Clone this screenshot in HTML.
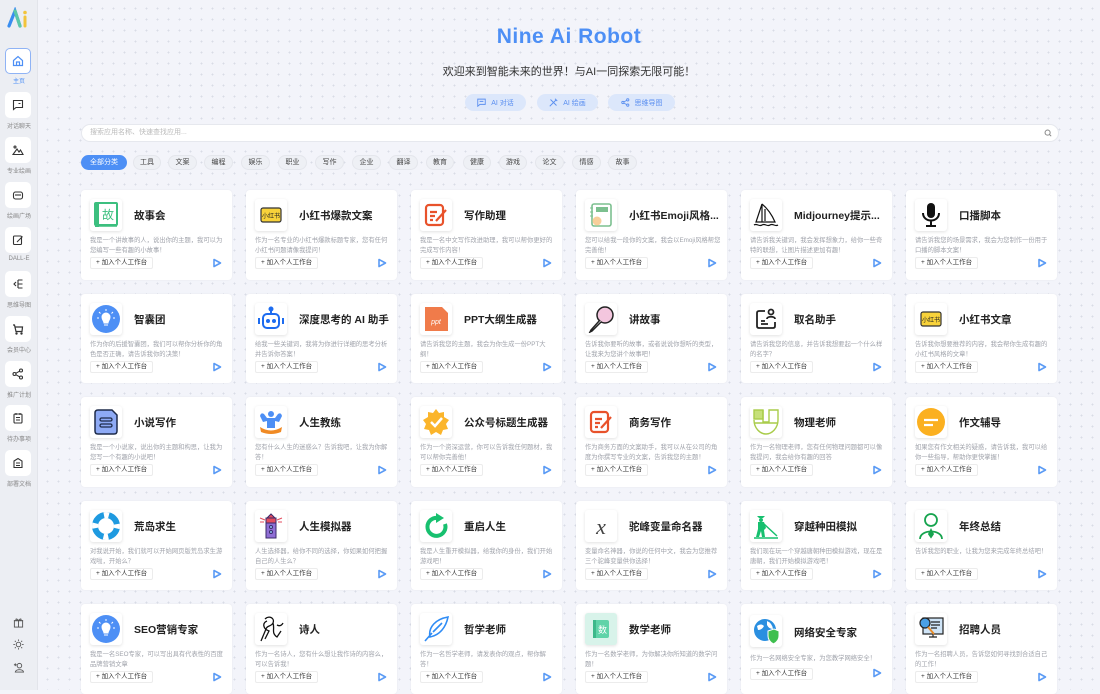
<!DOCTYPE html>
<html><head><meta charset="utf-8">
<style>
*{box-sizing:border-box;margin:0;padding:0}
body{width:1100px;height:690px;overflow:hidden;font-family:"Liberation Sans","Noto Sans CJK SC",sans-serif;background:#f3f4fa;position:relative}
.side{position:absolute;left:0;top:0;width:38px;height:690px;background:#eceef3;border-right:1px solid #e2e4ea}
.main{position:absolute;left:38px;top:0;right:0;height:690px;background-color:#f3f4fa;background-image:radial-gradient(#d9dce6 0.8px,transparent 1px);background-size:11px 11px;background-position:4px 3px}
.sb{position:absolute;left:5px;width:26px;height:26px;background:#fff;border-radius:5px;display:flex;align-items:center;justify-content:center}
.sl{position:absolute;left:0;width:38px;text-align:center;font-size:6px;color:#888}
.title{position:absolute;left:38px;right:0;top:25px;text-align:center;font-size:21px;font-weight:bold;color:#4d8ff5;letter-spacing:0.5px}
.sub{position:absolute;left:38px;right:0;top:63px;text-align:center;font-size:11px;color:#333}
.qb{position:absolute;top:94px;height:17px;border-radius:9px;background:#dce7fb;color:#5b8ff0;font-size:7px;display:flex;align-items:center;justify-content:center;gap:5px}
.search{position:absolute;left:81px;top:124px;width:978px;height:18px;background:#fff;border-radius:9px;border:1px solid #e6e8ee;font-size:7px;color:#bbb;padding-left:8px;line-height:16px}
.tag{position:absolute;top:155px;height:15px;border-radius:8px;background:#eef0f5;border:1px solid #e4e6ec;font-size:7px;color:#444;text-align:center;line-height:13px}
.grid{position:absolute;left:81px;top:190px;display:grid;grid-template-columns:repeat(6,151px);grid-auto-rows:89.5px;column-gap:14px;row-gap:14px}
.card{background:#fff;border-radius:4px;position:relative;box-shadow:0 0 2px rgba(0,0,0,0.05)}
.ic{position:absolute;left:9px;top:9px;width:32px;height:32px;border-radius:3px;background:#fff;box-shadow:0 1px 3px rgba(0,0,0,0.12);display:flex;align-items:center;justify-content:center;overflow:hidden}
.t{position:absolute;left:53px;top:18px;font-size:10.5px;font-weight:bold;color:#222;white-space:nowrap;max-width:92px;overflow:hidden;text-overflow:ellipsis}
.d{position:absolute;left:9px;top:46px;width:136px;font-size:6.3px;line-height:10px;color:#a0a3ab;height:20px;overflow:hidden}
.b{position:absolute;left:9px;top:67px;height:12px;border:1px solid #ececec;border-radius:2px;font-size:6.5px;color:#333;line-height:10px;padding:0 5px}
.p{position:absolute;right:10px;top:68px}
</style></head><body>
<div class="side">
<svg style="position:absolute;left:7px;top:7px" width="22" height="22" viewBox="0 0 22 22"><path d="M2 19 L8 4 L13 19" stroke="#3a8ef0" stroke-width="3.2" fill="none" stroke-linecap="round"/><path d="M8 4 L13 19" stroke="#5cc8a8" stroke-width="3.2" fill="none" stroke-linecap="round"/><path d="M18 10 V19" stroke="#f2c43b" stroke-width="3" stroke-linecap="round"/><circle cx="18" cy="5.5" r="1.8" fill="#f2c43b"/></svg>
<div class="sb" style="top:48px;border:1px solid #8fb3f5"><svg width="12" height="12" viewBox="0 0 12 12" fill="none" stroke="#4d8ff5" stroke-width="1.2"><path d="M1.5 5.5 L6 1.5 L10.5 5.5 V10.5 H1.5 Z M4.5 10.5 V7 H7.5 V10.5"/></svg></div><div class="sl" style="top:76px;color:#4d8ff5">主页</div>
<div class="sb" style="top:92px"><svg width="12" height="12" viewBox="0 0 12 12" fill="none" stroke="#333" stroke-width="1.1"><path d="M1.5 1.5 H10.5 V8.5 H4 L1.5 10.5 Z M6.5 4.5 H8.5"/></svg></div><div class="sl" style="top:121px">对话聊天</div>
<div class="sb" style="top:137px"><svg width="12" height="12" viewBox="0 0 12 12" fill="none" stroke="#333" stroke-width="1.1"><circle cx="3" cy="3" r="1"/><path d="M1 10.5 L5 5 L7 8 L8.5 6 L11 10.5 Z"/></svg></div><div class="sl" style="top:166px">专业绘画</div>
<div class="sb" style="top:182px"><svg width="12" height="12" viewBox="0 0 12 12" fill="none" stroke="#333" stroke-width="1.1"><rect x="1.5" y="3" width="9" height="7" rx="2"/><path d="M3 6 H9"/></svg></div><div class="sl" style="top:211px">绘画广场</div>
<div class="sb" style="top:227px"><svg width="12" height="12" viewBox="0 0 12 12" fill="none" stroke="#333" stroke-width="1.1"><rect x="1.5" y="2" width="8" height="8.5" rx="1"/><path d="M5 8 L10.5 2.5"/></svg></div><div class="sl" style="top:256px">DALL-E</div>
<div class="sb" style="top:271px"><svg width="12" height="12" viewBox="0 0 12 12" fill="none" stroke="#333" stroke-width="1.1"><path d="M6 2 H10.5 M6 6 H10.5 M6 10 H10.5 M6 2 V10 M4 4 L2 6 L4 8"/></svg></div><div class="sl" style="top:300px">思维导图</div>
<div class="sb" style="top:316px"><svg width="12" height="12" viewBox="0 0 12 12" fill="none" stroke="#333" stroke-width="1.2"><path d="M1 2 H2.5 L4 8.5 H10 L10.5 4 H3"/><circle cx="4.5" cy="10.5" r="0.6"/><circle cx="9.5" cy="10.5" r="0.6"/></svg></div><div class="sl" style="top:345px">会员中心</div>
<div class="sb" style="top:361px"><svg width="12" height="12" viewBox="0 0 12 12" fill="none" stroke="#333" stroke-width="1.1"><circle cx="9" cy="2.5" r="1.5"/><circle cx="2.5" cy="6" r="1.5"/><circle cx="9" cy="9.5" r="1.5"/><path d="M4 5.2 L7.6 3.2 M4 6.8 L7.6 8.8"/></svg></div><div class="sl" style="top:390px">推广计划</div>
<div class="sb" style="top:405px"><svg width="12" height="12" viewBox="0 0 12 12" fill="none" stroke="#333" stroke-width="1.1"><rect x="2" y="2" width="8" height="9" rx="1"/><path d="M4 1 V3 M8 1 V3 M4 5.5 H8 M4 8 H8"/></svg></div><div class="sl" style="top:434px">待办事项</div>
<div class="sb" style="top:450px"><svg width="12" height="12" viewBox="0 0 12 12" fill="none" stroke="#333" stroke-width="1.1"><path d="M2 4 L6 1.5 L10 4 V10.5 H2 Z M4 6 H8 M4 8.5 H8"/></svg></div><div class="sl" style="top:479px">部署文档</div>
<svg style="position:absolute;left:13px;top:617px" width="11" height="11" viewBox="0 0 12 12" fill="none" stroke="#555" stroke-width="1"><rect x="1.5" y="4" width="9" height="7"/><path d="M1 4 H11 M6 4 V11 M6 4 C4 1 2 2 4 4 M6 4 C8 1 10 2 8 4"/></svg>
<svg style="position:absolute;left:13px;top:639px" width="11" height="11" viewBox="0 0 12 12" fill="none" stroke="#555" stroke-width="1"><circle cx="6" cy="6" r="2.5"/><path d="M6 0.5 V2 M6 10 V11.5 M0.5 6 H2 M10 6 H11.5 M2 2 L3 3 M9 9 L10 10 M2 10 L3 9 M9 3 L10 2"/></svg>
<svg style="position:absolute;left:13px;top:662px" width="11" height="11" viewBox="0 0 12 12" fill="none" stroke="#555" stroke-width="1"><circle cx="7" cy="4" r="2.5"/><path d="M2.5 11 C3 7.5 11 7.5 11.5 11 Z M1 3 H4 M2.5 1.5 V4.5"/></svg>
</div>
<div class="main"></div>
<div class="title">Nine Ai Robot</div>
<div class="sub">欢迎来到智能未来的世界！与AI一同探索无限可能！</div>
<div class="qb" style="left:465px;width:61px"><svg width="9" height="9" viewBox="0 0 12 12" fill="none" stroke="#5b8ff0" stroke-width="1.2"><path d="M1 1.5 H11 V8.5 H4 L1 11 Z M3.5 4.5 H8.5"/></svg>AI 对话</div>
<div class="qb" style="left:537px;width:61px"><svg width="9" height="9" viewBox="0 0 12 12" fill="none" stroke="#5b8ff0" stroke-width="1.2"><path d="M1 11 L10 2 M2 2 L10 10 M8 1 L11 4"/></svg>AI 绘画</div>
<div class="qb" style="left:608px;width:67px"><svg width="9" height="9" viewBox="0 0 12 12" fill="none" stroke="#5b8ff0" stroke-width="1.2"><circle cx="9" cy="2.5" r="1.5"/><circle cx="2.5" cy="6" r="1.5"/><circle cx="9" cy="9.5" r="1.5"/><path d="M4 5.2 L7.6 3.2 M4 6.8 L7.6 8.8"/></svg>思维导图</div>
<div class="search">搜索应用名称、快速查找应用...<svg style="position:absolute;right:6px;top:4px" width="8" height="8" viewBox="0 0 10 10" fill="none" stroke="#888" stroke-width="1.2"><circle cx="4.5" cy="4.5" r="3.2"/><path d="M7 7 L9 9"/></svg></div>
<div class="tag" style="left:81px;width:46px;background:#4d8ff5;border-color:#4d8ff5;color:#fff">全部分类</div>
<div class="tag" style="left:133px;width:28px">工具</div>
<div class="tag" style="left:168px;width:29px">文案</div>
<div class="tag" style="left:204px;width:29px">编程</div>
<div class="tag" style="left:241px;width:29px">娱乐</div>
<div class="tag" style="left:278px;width:29px">职业</div>
<div class="tag" style="left:315px;width:29px">写作</div>
<div class="tag" style="left:352px;width:29px">企业</div>
<div class="tag" style="left:389px;width:29px">翻译</div>
<div class="tag" style="left:426px;width:28px">教育</div>
<div class="tag" style="left:463px;width:28px">健康</div>
<div class="tag" style="left:499px;width:28px">游戏</div>
<div class="tag" style="left:535px;width:29px">论文</div>
<div class="tag" style="left:572px;width:29px">情感</div>
<div class="tag" style="left:608px;width:29px">故事</div>

<div class="grid">
<!-- row 1 -->
<div class="card"><div class="ic"><svg width="28" height="28" viewBox="0 0 28 28"><rect x="3" y="2" width="22" height="22" rx="1" fill="#fff" stroke="#3cbf7f" stroke-width="2"/><rect x="3" y="2" width="4" height="24" fill="#3cbf7f"/><path d="M5 25 H25" stroke="#3cbf7f" stroke-width="1.5"/><text x="16" y="18" font-size="12" fill="#3cbf7f" text-anchor="middle" font-family="Noto Sans CJK SC">故</text></svg></div><div class="t">故事会</div><div class="d">我是一个讲故事的人，说出你的主题，我可以为您编写一些有趣的小故事！</div><div class="b">+ 加入个人工作台</div><svg class="p" width="10" height="10" viewBox="0 0 10 10"><path d="M2 1.5 L8.5 5 L2 8.5 Z" fill="none" stroke="#5b9bf5" stroke-width="1.6" stroke-linejoin="round"/></svg></div>
<div class="card"><div class="ic"><svg width="26" height="26" viewBox="0 0 26 26"><rect x="3" y="6" width="20" height="14" rx="2" fill="#f8d23a" stroke="#333" stroke-width="1.2"/><text x="13" y="16" font-size="6" text-anchor="middle" fill="#222" font-family="Noto Sans CJK SC">小红书</text></svg></div><div class="t">小红书爆款文案</div><div class="d">作为一名专业的小红书爆款标题专家，您有任何小红书问题请像我提问！</div><div class="b">+ 加入个人工作台</div><svg class="p" width="10" height="10" viewBox="0 0 10 10"><path d="M2 1.5 L8.5 5 L2 8.5 Z" fill="none" stroke="#5b9bf5" stroke-width="1.6" stroke-linejoin="round"/></svg></div>
<div class="card"><div class="ic"><svg width="26" height="26" viewBox="0 0 26 26" fill="none" stroke="#e8522b" stroke-width="2.2"><rect x="3" y="3" width="17" height="20" rx="3"/><path d="M7 10 H14 M7 14 H12 M7 18 H10 M13 19 L23 8"/></svg></div><div class="t">写作助理</div><div class="d">我是一名中文写作改进助理，我可以帮你更好的完成写作内容！</div><div class="b">+ 加入个人工作台</div><svg class="p" width="10" height="10" viewBox="0 0 10 10"><path d="M2 1.5 L8.5 5 L2 8.5 Z" fill="none" stroke="#5b9bf5" stroke-width="1.6" stroke-linejoin="round"/></svg></div>
<div class="card"><div class="ic"><svg width="26" height="26" viewBox="0 0 26 26"><rect x="4" y="2" width="19" height="22" rx="2" fill="#fff" stroke="#7cc08f" stroke-width="1.6"/><rect x="8" y="5" width="12" height="5" fill="#7cc08f"/><circle cx="9" cy="19" r="4.5" fill="#f7cf9b"/><path d="M2 6 H5 M2 10 H5 M2 14 H5" stroke="#7cc08f"/></svg></div><div class="t">小红书Emoji风格...</div><div class="d">您可以给我一段你的文案，我会以Emoji风格帮您完善他！</div><div class="b">+ 加入个人工作台</div><svg class="p" width="10" height="10" viewBox="0 0 10 10"><path d="M2 1.5 L8.5 5 L2 8.5 Z" fill="none" stroke="#5b9bf5" stroke-width="1.6" stroke-linejoin="round"/></svg></div>
<div class="card"><div class="ic"><svg width="28" height="28" viewBox="0 0 28 28" fill="none" stroke="#111" stroke-width="1.2"><path d="M10 3 L10 21 M10 3 C16 8 20 14 23 21 H4 C6 15 8 9 10 3 M13 8 L13 20 M2 24 C5 22 7 26 10 24 C13 22 15 26 18 24 C21 22 23 26 26 24"/></svg></div><div class="t">Midjourney提示...</div><div class="d">请告诉我关键词，我会发挥想象力，给你一些奇特的联想，让图片描述更加有趣！</div><div class="b">+ 加入个人工作台</div><svg class="p" width="10" height="10" viewBox="0 0 10 10"><path d="M2 1.5 L8.5 5 L2 8.5 Z" fill="none" stroke="#5b9bf5" stroke-width="1.6" stroke-linejoin="round"/></svg></div>
<div class="card"><div class="ic"><svg width="26" height="26" viewBox="0 0 26 26"><rect x="9" y="1" width="8" height="15" rx="4" fill="#111"/><path d="M5 11 C5 21 21 21 21 11 M13 19 V24 M8 24 H18" stroke="#111" stroke-width="2" fill="none"/></svg></div><div class="t">口播脚本</div><div class="d">请告诉我您的场景需求，我会为您制作一份用于口播的脚本文案！</div><div class="b">+ 加入个人工作台</div><svg class="p" width="10" height="10" viewBox="0 0 10 10"><path d="M2 1.5 L8.5 5 L2 8.5 Z" fill="none" stroke="#5b9bf5" stroke-width="1.6" stroke-linejoin="round"/></svg></div>
<!-- row 2 -->
<div class="card"><div class="ic"><svg width="30" height="30" viewBox="0 0 30 30"><circle cx="15" cy="15" r="14" fill="#4d8ff5"/><path d="M11 13 A4 4 0 1 1 19 13 C19 16 17 17 17 19 H13 C13 17 11 16 11 13 Z M13 21 H17" fill="#fff" stroke="#fff"/><path d="M15 5 V7 M8 8 L9.5 9.5 M22 8 L20.5 9.5 M6 14 H8 M22 14 H24" stroke="#fff"/></svg></div><div class="t">智囊团</div><div class="d">作为你的后援智囊团，我们可以帮你分析你的角色是否正确，请告诉我你的决策！</div><div class="b">+ 加入个人工作台</div><svg class="p" width="10" height="10" viewBox="0 0 10 10"><path d="M2 1.5 L8.5 5 L2 8.5 Z" fill="none" stroke="#5b9bf5" stroke-width="1.6" stroke-linejoin="round"/></svg></div>
<div class="card"><div class="ic"><svg width="28" height="28" viewBox="0 0 28 28" fill="none" stroke="#1d6cf0" stroke-width="2"><circle cx="14" cy="4" r="1.5" fill="#1d6cf0"/><path d="M14 5 V9"/><rect x="6" y="9" width="16" height="14" rx="4"/><path d="M2 13 V19 M26 13 V19"/><circle cx="11" cy="16" r="1" fill="#1d6cf0"/><circle cx="17" cy="16" r="1" fill="#1d6cf0"/></svg></div><div class="t">深度思考的 AI 助手</div><div class="d">给我一些关键词，我将为你进行详细的思考分析并告诉你答案！</div><div class="b">+ 加入个人工作台</div><svg class="p" width="10" height="10" viewBox="0 0 10 10"><path d="M2 1.5 L8.5 5 L2 8.5 Z" fill="none" stroke="#5b9bf5" stroke-width="1.6" stroke-linejoin="round"/></svg></div>
<div class="card"><div class="ic"><svg width="28" height="28" viewBox="0 0 28 28"><path d="M3 2 H20 L26 8 V26 H3 Z" fill="#f07b4a"/><text x="14" y="19" font-size="7" fill="#fff" font-style="italic" text-anchor="middle">ppt</text></svg></div><div class="t">PPT大纲生成器</div><div class="d">请告诉我您的主题，我会为你生成一份PPT大纲！</div><div class="b">+ 加入个人工作台</div><svg class="p" width="10" height="10" viewBox="0 0 10 10"><path d="M2 1.5 L8.5 5 L2 8.5 Z" fill="none" stroke="#5b9bf5" stroke-width="1.6" stroke-linejoin="round"/></svg></div>
<div class="card"><div class="ic"><svg width="28" height="28" viewBox="0 0 28 28" stroke="#222" stroke-width="1.5"><circle cx="18" cy="10" r="8" fill="#f3c6de"/><path d="M13 15 L4 25 L3 27 L5 26 L14 17" fill="#fff"/></svg></div><div class="t">讲故事</div><div class="d">告诉我你要听的故事，或者说说你想听的类型，让我来为您讲个故事吧！</div><div class="b">+ 加入个人工作台</div><svg class="p" width="10" height="10" viewBox="0 0 10 10"><path d="M2 1.5 L8.5 5 L2 8.5 Z" fill="none" stroke="#5b9bf5" stroke-width="1.6" stroke-linejoin="round"/></svg></div>
<div class="card"><div class="ic"><svg width="26" height="26" viewBox="0 0 26 26" fill="none" stroke="#222" stroke-width="1.8"><path d="M12 5 H6 Q4 5 4 7 V20 Q4 22 6 22 H20 Q22 22 22 20 V16"/><circle cx="18" cy="6" r="2.5"/><path d="M14 13 C14 10 22 10 22 13 M8 15 H12 M8 18 H15"/></svg></div><div class="t">取名助手</div><div class="d">请告诉我您的信息，并告诉我想要起一个什么样的名字？</div><div class="b">+ 加入个人工作台</div><svg class="p" width="10" height="10" viewBox="0 0 10 10"><path d="M2 1.5 L8.5 5 L2 8.5 Z" fill="none" stroke="#5b9bf5" stroke-width="1.6" stroke-linejoin="round"/></svg></div>
<div class="card"><div class="ic"><svg width="26" height="26" viewBox="0 0 26 26"><rect x="3" y="6" width="20" height="14" rx="2" fill="#f8d23a" stroke="#333" stroke-width="1.2"/><text x="13" y="16" font-size="6" text-anchor="middle" fill="#222" font-family="Noto Sans CJK SC">小红书</text></svg></div><div class="t">小红书文章</div><div class="d">告诉我你想要推荐的内容，我会帮你生成有趣的小红书风格的文章！</div><div class="b">+ 加入个人工作台</div><svg class="p" width="10" height="10" viewBox="0 0 10 10"><path d="M2 1.5 L8.5 5 L2 8.5 Z" fill="none" stroke="#5b9bf5" stroke-width="1.6" stroke-linejoin="round"/></svg></div>
<!-- row 3 -->
<div class="card"><div class="ic"><svg width="28" height="28" viewBox="0 0 28 28"><path d="M3 5 Q3 2 6 2 H20 L25 7 V23 Q25 26 22 26 H6 Q3 26 3 23 Z" fill="#8eaaf5" stroke="#1e2b4a" stroke-width="1.5"/><rect x="8" y="10" width="12" height="3" rx="1.5" fill="none" stroke="#1e2b4a" stroke-width="1.3"/><rect x="8" y="16" width="12" height="3" rx="1.5" fill="none" stroke="#1e2b4a" stroke-width="1.3"/></svg></div><div class="t">小说写作</div><div class="d">我是一个小说家，说出你的主题和构思，让我为您写一个有趣的小说吧！</div><div class="b">+ 加入个人工作台</div><svg class="p" width="10" height="10" viewBox="0 0 10 10"><path d="M2 1.5 L8.5 5 L2 8.5 Z" fill="none" stroke="#5b9bf5" stroke-width="1.6" stroke-linejoin="round"/></svg></div>
<div class="card"><div class="ic"><svg width="28" height="28" viewBox="0 0 28 28"><circle cx="14" cy="6" r="3" fill="#4d8ff5"/><path d="M3 8 Q4 4 7 6 L10 10 H18 L21 6 Q24 4 25 8 L22 14 L18 13 V20 H10 V13 L6 14 Z" fill="#4d8ff5"/><path d="M3 19 Q14 26 25 19 L24 24 Q14 28 4 24 Z" fill="#f08a24"/></svg></div><div class="t">人生教练</div><div class="d">您有什么人生的迷惑么？告诉我吧，让我为你解答！</div><div class="b">+ 加入个人工作台</div><svg class="p" width="10" height="10" viewBox="0 0 10 10"><path d="M2 1.5 L8.5 5 L2 8.5 Z" fill="none" stroke="#5b9bf5" stroke-width="1.6" stroke-linejoin="round"/></svg></div>
<div class="card"><div class="ic"><svg width="28" height="28" viewBox="0 0 28 28"><path d="M14 1 L17 5 L22 4 L22 9 L27 12 L24 16 L26 21 L21 22 L19 27 L14 24 L9 27 L7 22 L2 21 L4 16 L1 12 L6 9 L6 4 L11 5 Z" fill="#fbb52b"/><path d="M9 14 L13 18 L20 10" stroke="#fff" stroke-width="2.5" fill="none"/></svg></div><div class="t">公众号标题生成器</div><div class="d">作为一个资深运营，你可以告诉我任何题材，我可以帮你完善他！</div><div class="b">+ 加入个人工作台</div><svg class="p" width="10" height="10" viewBox="0 0 10 10"><path d="M2 1.5 L8.5 5 L2 8.5 Z" fill="none" stroke="#5b9bf5" stroke-width="1.6" stroke-linejoin="round"/></svg></div>
<div class="card"><div class="ic"><svg width="26" height="26" viewBox="0 0 26 26" fill="none" stroke="#e8522b" stroke-width="2.2"><rect x="3" y="3" width="17" height="20" rx="3"/><path d="M7 10 H14 M7 14 H12 M7 18 H10 M13 19 L23 8"/></svg></div><div class="t">商务写作</div><div class="d">作为商务方面的文案助手，我可以从在公司的角度为你撰写专业的文案，告诉我您的主题！</div><div class="b">+ 加入个人工作台</div><svg class="p" width="10" height="10" viewBox="0 0 10 10"><path d="M2 1.5 L8.5 5 L2 8.5 Z" fill="none" stroke="#5b9bf5" stroke-width="1.6" stroke-linejoin="round"/></svg></div>
<div class="card"><div class="ic"><svg width="28" height="28" viewBox="0 0 28 28" stroke="#a9cc4a" stroke-width="1.4"><rect x="2" y="2" width="9" height="9" fill="#c6e07a"/><path d="M11 2 V14 H17 V2 H26 V12 C26 20 20 26 14 26 C8 26 2 20 2 12 M2 15 H26" fill="none"/></svg></div><div class="t">物理老师</div><div class="d">作为一名物理老师，您有任何物理问题都可以像我提问，我会给你有趣的回答</div><div class="b">+ 加入个人工作台</div><svg class="p" width="10" height="10" viewBox="0 0 10 10"><path d="M2 1.5 L8.5 5 L2 8.5 Z" fill="none" stroke="#5b9bf5" stroke-width="1.6" stroke-linejoin="round"/></svg></div>
<div class="card"><div class="ic"><svg width="30" height="30" viewBox="0 0 30 30"><circle cx="15" cy="15" r="14" fill="#fbb020"/><path d="M8 13 H22 M8 18 H17" stroke="#fff" stroke-width="2.2"/></svg></div><div class="t">作文辅导</div><div class="d">如果您有作文相关的疑惑，请告诉我，我可以给你一些指导，帮助你更快掌握！</div><div class="b">+ 加入个人工作台</div><svg class="p" width="10" height="10" viewBox="0 0 10 10"><path d="M2 1.5 L8.5 5 L2 8.5 Z" fill="none" stroke="#5b9bf5" stroke-width="1.6" stroke-linejoin="round"/></svg></div>
<!-- row 4 -->
<div class="card"><div class="ic"><svg width="28" height="28" viewBox="0 0 28 28"><circle cx="14" cy="14" r="11" fill="none" stroke="#1f9ae0" stroke-width="6"/><circle cx="14" cy="14" r="11" fill="none" stroke="#fff" stroke-width="6" stroke-dasharray="5 12.3" stroke-dashoffset="2.5"/></svg></div><div class="t">荒岛求生</div><div class="d">对我说开始，我们就可以开始网页版荒岛求生游戏啦，开始么？</div><div class="b">+ 加入个人工作台</div><svg class="p" width="10" height="10" viewBox="0 0 10 10"><path d="M2 1.5 L8.5 5 L2 8.5 Z" fill="none" stroke="#5b9bf5" stroke-width="1.6" stroke-linejoin="round"/></svg></div>
<div class="card"><div class="ic"><svg width="28" height="28" viewBox="0 0 28 28" stroke="#3b2b6b" stroke-width="1"><path d="M10 6 L14 2 L18 6 Z" fill="#e34d5f"/><rect x="9" y="6" width="10" height="5" fill="#e34d5f"/><rect x="9" y="11" width="10" height="15" fill="#8f6ed5"/><circle cx="14" cy="15" r="1.5" fill="#8ec5f5"/><circle cx="14" cy="20" r="1.5" fill="#8ec5f5"/><path d="M3 6 L8 8 M25 6 L20 8 M3 10 H7 M25 10 H21" stroke="#e34d5f"/></svg></div><div class="t">人生模拟器</div><div class="d">人生选择器，给你不同的选择，你如果如何把握自己的人生么？</div><div class="b">+ 加入个人工作台</div><svg class="p" width="10" height="10" viewBox="0 0 10 10"><path d="M2 1.5 L8.5 5 L2 8.5 Z" fill="none" stroke="#5b9bf5" stroke-width="1.6" stroke-linejoin="round"/></svg></div>
<div class="card"><div class="ic"><svg width="28" height="28" viewBox="0 0 28 28"><path d="M16 6 A9 9 0 1 0 23 12" fill="none" stroke="#17c06f" stroke-width="4"/><path d="M14 1 L22 6 L14 11 Z" fill="#17c06f"/></svg></div><div class="t">重启人生</div><div class="d">我是人生重开模拟器，给我你的身份，我们开始游戏吧！</div><div class="b">+ 加入个人工作台</div><svg class="p" width="10" height="10" viewBox="0 0 10 10"><path d="M2 1.5 L8.5 5 L2 8.5 Z" fill="none" stroke="#5b9bf5" stroke-width="1.6" stroke-linejoin="round"/></svg></div>
<div class="card"><div class="ic"><svg width="28" height="28" viewBox="0 0 28 28"><text x="14" y="22" font-size="22" font-family="Liberation Serif" font-style="italic" fill="#444" text-anchor="middle">x</text></svg></div><div class="t">驼峰变量命名器</div><div class="d">变量命名神器，你说的任何中文，我会为您推荐三个驼峰变量供你选择！</div><div class="b">+ 加入个人工作台</div><svg class="p" width="10" height="10" viewBox="0 0 10 10"><path d="M2 1.5 L8.5 5 L2 8.5 Z" fill="none" stroke="#5b9bf5" stroke-width="1.6" stroke-linejoin="round"/></svg></div>
<div class="card"><div class="ic"><svg width="28" height="28" viewBox="0 0 28 28" fill="#17c06f"><path d="M5 4 H13 L11 6 H7 Z"/><circle cx="9" cy="8" r="2"/><path d="M6 10 H12 L14 16 L12 18 L13 25 H10 L9 19 L7 25 H4 L6 17 Z"/><path d="M12 12 L25 24" stroke="#17c06f" stroke-width="1.5"/><path d="M2 26 H26" stroke="#17c06f" stroke-width="1.5"/></svg></div><div class="t">穿越种田模拟</div><div class="d">我们现在玩一个穿越唐朝种田模拟游戏，现在是唐朝，我们开始模拟游戏吧！</div><div class="b">+ 加入个人工作台</div><svg class="p" width="10" height="10" viewBox="0 0 10 10"><path d="M2 1.5 L8.5 5 L2 8.5 Z" fill="none" stroke="#5b9bf5" stroke-width="1.6" stroke-linejoin="round"/></svg></div>
<div class="card"><div class="ic"><svg width="28" height="28" viewBox="0 0 28 28" fill="none" stroke="#17a44f" stroke-width="1.8"><circle cx="14" cy="8" r="6"/><path d="M3 27 C3 17 25 17 25 27"/><path d="M14 18 L12 22 L14 25 L16 22 Z" fill="#17a44f"/></svg></div><div class="t">年终总结</div><div class="d">告诉我您的职业，让我为您来完成年终总结吧！</div><div class="b">+ 加入个人工作台</div><svg class="p" width="10" height="10" viewBox="0 0 10 10"><path d="M2 1.5 L8.5 5 L2 8.5 Z" fill="none" stroke="#5b9bf5" stroke-width="1.6" stroke-linejoin="round"/></svg></div>
<!-- row 5 -->
<div class="card"><div class="ic"><svg width="30" height="30" viewBox="0 0 30 30"><circle cx="15" cy="15" r="14" fill="#4d8ff5"/><path d="M11 13 A4 4 0 1 1 19 13 C19 16 17 17 17 19 H13 C13 17 11 16 11 13 Z M13 21 H17" fill="#fff" stroke="#fff"/><path d="M15 5 V7 M8 8 L9.5 9.5 M22 8 L20.5 9.5 M6 14 H8 M22 14 H24" stroke="#fff"/></svg></div><div class="t">SEO营销专家</div><div class="d">我是一名SEO专家，可以写出具有代表性的百度品牌营销文章</div><div class="b">+ 加入个人工作台</div><svg class="p" width="10" height="10" viewBox="0 0 10 10"><path d="M2 1.5 L8.5 5 L2 8.5 Z" fill="none" stroke="#5b9bf5" stroke-width="1.6" stroke-linejoin="round"/></svg></div>
<div class="card"><div class="ic"><svg width="28" height="28" viewBox="0 0 28 28" fill="none" stroke="#111" stroke-width="1.3"><path d="M8 4 C12 0 18 3 16 8 C14 12 10 10 9 14 L4 26 M16 8 C18 14 14 18 20 22 L24 16 M10 6 C5 8 6 14 12 16 L8 24 M20 10 Q24 12 26 8"/></svg></div><div class="t">诗人</div><div class="d">作为一名诗人，您有什么想让我作诗的内容么，可以告诉我！</div><div class="b">+ 加入个人工作台</div><svg class="p" width="10" height="10" viewBox="0 0 10 10"><path d="M2 1.5 L8.5 5 L2 8.5 Z" fill="none" stroke="#5b9bf5" stroke-width="1.6" stroke-linejoin="round"/></svg></div>
<div class="card"><div class="ic"><svg width="28" height="28" viewBox="0 0 28 28" fill="none" stroke="#2f8cf5" stroke-width="1.6"><path d="M3 26 L10 18 M8 22 C6 12 14 4 26 2 C24 12 18 20 8 22 Z M11 17 L20 8"/></svg></div><div class="t">哲学老师</div><div class="d">作为一名哲学老师，请发表你的观点，帮你解答！</div><div class="b">+ 加入个人工作台</div><svg class="p" width="10" height="10" viewBox="0 0 10 10"><path d="M2 1.5 L8.5 5 L2 8.5 Z" fill="none" stroke="#5b9bf5" stroke-width="1.6" stroke-linejoin="round"/></svg></div>
<div class="card"><div class="ic" style="background:#d8f3ea"><svg width="24" height="24" viewBox="0 0 24 24"><rect x="4" y="3" width="16" height="18" rx="2" fill="#5fd3a8"/><rect x="4" y="3" width="3" height="18" fill="#3db88a"/><text x="13.5" y="16" font-size="9" fill="#fff" text-anchor="middle" font-family="Noto Sans CJK SC">数</text></svg></div><div class="t">数学老师</div><div class="d">作为一名数学老师，为你解决你所知道的数学问题！</div><div class="b">+ 加入个人工作台</div><svg class="p" width="10" height="10" viewBox="0 0 10 10"><path d="M2 1.5 L8.5 5 L2 8.5 Z" fill="none" stroke="#5b9bf5" stroke-width="1.6" stroke-linejoin="round"/></svg></div>
<div class="card"><div class="ic" style="top:11px"><svg width="28" height="28" viewBox="0 0 28 28"><circle cx="13" cy="13" r="11" fill="#2a8fe0"/><path d="M5 9 Q9 6 12 9 Q10 13 6 13 Z M15 4 Q20 6 21 12 Q17 12 15 8 Z" fill="#fff"/><path d="M16 14 L22 12 L27 14 V19 Q27 24 21.5 27 Q16 24 16 19 Z" fill="#3fbf4f" stroke="#fff"/></svg></div><div class="t" style="top:21px">网络安全专家</div><div class="d" style="top:50px">作为一名网络安全专家，为您教学网络安全！</div><div class="b" style="top:64px">+ 加入个人工作台</div><svg class="p" style="top:64px" width="10" height="10" viewBox="0 0 10 10"><path d="M2 1.5 L8.5 5 L2 8.5 Z" fill="none" stroke="#5b9bf5" stroke-width="1.6" stroke-linejoin="round"/></svg></div>
<div class="card"><div class="ic"><svg width="28" height="28" viewBox="0 0 28 28" stroke="#222" stroke-width="1.2"><rect x="6" y="3" width="20" height="16" fill="#cfe4f7"/><path d="M14 7 H23 M14 10 H23 M14 13 H20 M12 22 H20 M16 19 V22" fill="none"/><circle cx="8" cy="8" r="5" fill="#4aa0e6"/><path d="M11 12 L17 19" stroke="#e88c2a" stroke-width="2"/></svg></div><div class="t">招聘人员</div><div class="d">作为一名招聘人员，告诉您如何寻找到合适自己的工作！</div><div class="b">+ 加入个人工作台</div><svg class="p" width="10" height="10" viewBox="0 0 10 10"><path d="M2 1.5 L8.5 5 L2 8.5 Z" fill="none" stroke="#5b9bf5" stroke-width="1.6" stroke-linejoin="round"/></svg></div>
</div>
</body></html>
